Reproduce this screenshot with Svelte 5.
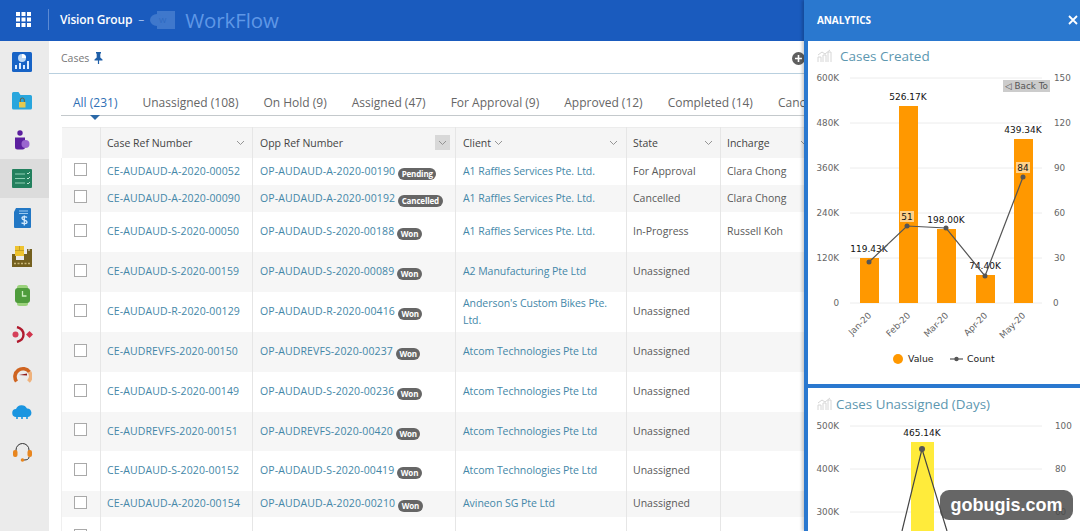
<script>
  const tabs = ['All (231)','Unassigned (108)','On Hold (9)','Assigned (47)','For Approval (9)','Approved (12)','Completed (14)','Cancelled (5)'];
  const rows = [
    {h:'s27',c:'CE-AUDAUD-A-2020-00052',o:'OP-AUDAUD-A-2020-00190',b:'Pending',cl:'A1 Raffles Services Pte. Ltd.',st:'For Approval',i:'Clara Chong'},
    {h:'s27',c:'CE-AUDAUD-A-2020-00090',o:'OP-AUDAUD-A-2020-00192',b:'Cancelled',cl:'A1 Raffles Services Pte. Ltd.',st:'Cancelled',i:'Clara Chong'},
    {h:'s40',c:'CE-AUDAUD-S-2020-00050',o:'OP-AUDAUD-S-2020-00188',b:'Won',cl:'A1 Raffles Services Pte. Ltd.',st:'In-Progress',i:'Russell Koh'},
    {h:'s40',c:'CE-AUDAUD-S-2020-00159',o:'OP-AUDAUD-S-2020-00089',b:'Won',cl:'A2 Manufacturing Pte Ltd',st:'Unassigned',i:''},
    {h:'s40',c:'CE-AUDAUD-R-2020-00129',o:'OP-AUDAUD-R-2020-00416',b:'Won',cl:"Anderson's Custom Bikes Pte. Ltd.",st:'Unassigned',i:''},
    {h:'s40',c:'CE-AUDREVFS-2020-00150',o:'OP-AUDREVFS-2020-00237',b:'Won',cl:'Atcom Technologies Pte Ltd',st:'Unassigned',i:''},
    {h:'s40',c:'CE-AUDAUD-S-2020-00149',o:'OP-AUDAUD-S-2020-00236',b:'Won',cl:'Atcom Technologies Pte Ltd',st:'Unassigned',i:''},
    {h:'s39',c:'CE-AUDREVFS-2020-00151',o:'OP-AUDREVFS-2020-00420',b:'Won',cl:'Atcom Technologies Pte Ltd',st:'Unassigned',i:''},
    {h:'s40',c:'CE-AUDAUD-S-2020-00152',o:'OP-AUDAUD-S-2020-00419',b:'Won',cl:'Atcom Technologies Pte Ltd',st:'Unassigned',i:''},
    {h:'s26',c:'CE-AUDAUD-A-2020-00154',o:'OP-AUDAUD-A-2020-00210',b:'Won',cl:'Avineon SG Pte Ltd',st:'Unassigned',i:''},
    {h:'s40',c:'',o:'',b:'',cl:'',st:'',i:''}
  ];
  const leftA = [['600K',78],['480K',123],['360K',168],['240K',213],['120K',258],['0',303]];
  const rightA = ['150','120','90','60','30','0'];
  const bars = [
    {x:860,top:258,m:'Jan-20',l:'119.43K',lx:869,ly:252},
    {x:899,top:106,m:'Feb-20',l:'526.17K',lx:908,ly:100},
    {x:937,top:229,m:'Mar-20',l:'198.00K',lx:946,ly:223},
    {x:976,top:275,m:'Apr-20',l:'74.40K',lx:985,ly:269},
    {x:1014,top:139,m:'May-20',l:'439.34K',lx:1023,ly:133}
  ];
  const pts = [[869,262],[907,226],[946,228],[985,276],[1023,177]];
  const poly = pts.map(p => p.join(',')).join(' ');
</script>

{#snippet chev()}
  <svg class="chev" width="9" height="6" viewBox="0 0 9 6"><path d="M1 1l3.500 3.500L8 1" fill="none" stroke="#8a8a8a" stroke-width="0.900"/></svg>
{/snippet}

{#snippet minichart()}
  <svg class="minichart" width="15" height="14" viewBox="0 0 15 14"><path d="M1 13V8h3v5M6 13V6h3v7M11 13V3h3v10M1 6l4-3 3 2 5-4" fill="none" stroke="#d6d6d6" stroke-width="1"/></svg>
{/snippet}

<div class="app">
  <header class="top">
    <svg class="waffle" width="15" height="15" viewBox="0 0 15 15" fill="#fff">
      {#each [0,5.5,11] as y}{#each [0,5.5,11] as x}<rect x={x} y={y} width="4" height="4"/>{/each}{/each}
    </svg>
    <span class="divider"></span>
    <span class="org">Vision Group</span>
    <span class="dash">–</span>
    <svg class="logo" width="25" height="20" viewBox="0 0 25 20"><rect x="7" y="1" width="18" height="18" fill="#3f78cc"/><ellipse cx="7" cy="10" rx="7" ry="6" fill="#3f78cc"/><text x="9" y="13" font-size="8" fill="#2d68c0" font-family="Open Sans">W</text></svg>
    <span class="product">WorkFlow</span>
  </header>

  <div class="body">
    <nav class="side">
      <div class="ni"><svg width="20" height="20" viewBox="0 0 20 20"><rect width="20" height="20" rx="1.500" fill="#1763c6"/><circle cx="10" cy="6" r="4" fill="#bcd8f5"/><path d="M10 6V2a4 4 0 0 1 4 4z" fill="#fff"/><path d="M3 17v-4h2v4zM7 17v-6h2v6zM11 17v-4h2v4zM15 17V9h2v8z" fill="#dcecff"/></svg></div>
      <div class="ni"><svg width="20" height="18" viewBox="0 0 20 18"><path d="M0 1.500A1.500 1.500 0 0 1 1.500 0h5l2 3h10A1.500 1.500 0 0 1 20 4.500V16a1.500 1.500 0 0 1-1.500 1.500h-17A1.500 1.500 0 0 1 0 16z" fill="#29a6dd"/><rect x="7" y="10" width="6.500" height="5.500" fill="#e6c94f"/><path d="M8.300 10V8a2 2 0 0 1 4 0v2" fill="none" stroke="#6b5f3a" stroke-width="1"/></svg></div>
      <div class="ni"><svg width="16" height="20" viewBox="0 0 16 20"><circle cx="6" cy="3" r="2.700" fill="#5b1f9e"/><path d="M1 7.500h10V17a2.500 2.500 0 0 1-2.500 2.500h-5A2.500 2.500 0 0 1 1 17z" fill="#5b1f9e"/><circle cx="11.500" cy="14" r="4" fill="#9a66cf"/></svg></div>
      <div class="ni active"><svg width="20" height="19" viewBox="0 0 20 19"><rect width="20" height="19" rx="1" fill="#23805e"/><path d="M3 5h10M3 9.500h10M3 14h10" stroke="#8fd0b4" stroke-width="1.200"/><path d="M15 4l1 1 2-2M15 9l1 1 2-2M15 14l1 1 2-2" fill="none" stroke="#cfeee0" stroke-width="0.900"/></svg></div>
      <div class="ni"><svg width="17" height="20" viewBox="0 0 17 20"><path d="M2 0h14a1 1 0 0 1 1 1v18a1 1 0 0 1-1 1H1a1 1 0 0 1-1-1V4z" fill="#2277c4"/><path d="M5 3h9M5 5.500h9" stroke="#9ccaf0" stroke-width="1"/><path d="M13 9.500c-1-1-5-1.500-5 .7 0 2.300 5 1.300 5 3.800 0 2.200-4 2-5.500.7M10.300 7.500v10" fill="none" stroke="#d3e9fb" stroke-width="1.300"/></svg></div>
      <div class="ni"><svg width="20" height="21" viewBox="0 0 20 21"><path d="M0 8h4v6h8V8h3V3h1.500v2h1V3H20v18H0z" fill="#74601f"/><rect x="3" y="0" width="9" height="10" fill="#eec32f"/><path d="M3 4.500h9M7.500 0v4.500" stroke="#b8951f" stroke-width="0.800"/><path d="M2 17.500h16" stroke="#c9b878" stroke-width="1.300" stroke-dasharray="2 1.500"/></svg></div>
      <div class="ni"><svg width="15" height="21" viewBox="0 0 15 21"><rect x="2" y="0" width="11" height="21" rx="2.500" fill="#9bd27c"/><rect y="3" width="15" height="15" rx="3" fill="#4f9c3c"/><path d="M7.500 6v5h4" fill="none" stroke="#cdeec0" stroke-width="1.300"/></svg></div>
      <div class="ni"><svg width="21" height="17" viewBox="0 0 21 17"><circle cx="3.500" cy="8.500" r="3" fill="#d5405a"/><path d="M5 1c5 1.500 6.500 4.500 6.500 7.500S10 14.500 5 16" fill="none" stroke="#b01a2e" stroke-width="2.400"/><path d="M14 8.500l3.500-3.500 3.500 3.500-3.500 3.500z" fill="#d0344c"/></svg></div>
      <div class="ni"><svg width="19" height="19" viewBox="0 0 19 19"><path d="M3.500 17.500A8 8 0 1 1 16.500 8" fill="none" stroke="#cf6420" stroke-width="3.600"/><path d="M16.500 8A8 8 0 0 1 15.500 17.500" fill="none" stroke="#efb27c" stroke-width="3.600"/><path d="M6 11l8-1.500v2z" fill="#8e1b1b"/></svg></div>
      <div class="ni"><svg width="20" height="16" viewBox="0 0 20 16"><path d="M4.500 12a4 4 0 0 1-.5-8 6 6 0 0 1 11-.5A4.300 4.300 0 0 1 16 12z" fill="#1a95e0"/><path d="M5 11v3M10 11v3M15 11v3" stroke="#1a95e0" stroke-width="1.600"/></svg></div>
      <div class="ni"><svg width="19" height="20" viewBox="0 0 19 20"><path d="M3 10V8a6.500 6.500 0 0 1 13 0v2" fill="none" stroke="#333" stroke-width="1"/><rect x="0" y="8" width="4.500" height="7" rx="2" fill="#e8861f"/><rect x="14.500" y="8" width="4.500" height="7" rx="2" fill="#e8861f"/><path d="M16 15q0 3-5 3" fill="none" stroke="#333" stroke-width="1"/><circle cx="9.500" cy="18" r="1.800" fill="#e8861f"/></svg></div>
    </nav>

    <main class="main">
      <div class="crumb">
        <span>Cases</span>
        <svg class="pin" width="9" height="12" viewBox="0 0 9 12"><path d="M2 0h5v1L6.300 2v3.500L8.500 7.500V8.500H5.100V12H3.900V8.500H.5V7.500L2.700 5.500V2L2 1z" fill="#1f5fa8"/></svg>
        <svg class="plus" width="13" height="13" viewBox="0 0 13 13"><circle cx="6.500" cy="6.500" r="6.500" fill="#5f5f5f"/><path d="M6.500 3v7M3 6.500h7" stroke="#fff" stroke-width="1.600"/></svg>
      </div>

      <div class="tabs">
        {#each tabs as t, i}
          <span class="tab" class:on={i === 0}>{t}</span>
        {/each}
      </div>

      <table>
        <colgroup><col class="c0"/><col class="c1"/><col class="c2"/><col class="c3"/><col class="c4"/><col class="c5"/></colgroup>
        <thead>
          <tr>
            <th></th>
            <th><div class="hc"><span>Case Ref Number</span>{@render chev()}</div></th>
            <th><div class="hc"><span>Opp Ref Number</span><span class="boxed">{@render chev()}</span></div></th>
            <th><div class="hc"><span class="lbl">Client {@render chev()}</span>{@render chev()}</div></th>
            <th><div class="hc"><span>State</span>{@render chev()}</div></th>
            <th><div class="hc"><span>Incharge</span>{@render chev()}</div></th>
          </tr>
        </thead>
        <tbody>
          {#each rows as r}
            <tr class={r.h}>
              <td class="ck"><span class="box"></span></td>
              <td><span class="link ref">{r.c}</span></td>
              <td><span class="link ref">{r.o}</span>{#if r.b}<span class="badge">{r.b}</span>{/if}</td>
              <td><span class="link client">{r.cl}</span></td>
              <td>{r.st}</td>
              <td>{r.i}</td>
            </tr>
          {/each}
        </tbody>
      </table>
    </main>
  </div>

  <aside class="panel">
    <div class="ph"><span>ANALYTICS</span><svg width="10" height="10" viewBox="0 0 10 10"><path d="M1 1l8 8M9 1l-8 8" stroke="#fff" stroke-width="1.800"/></svg></div>
    <section class="card first">
      <h3 class="t1">{@render minichart()}<span>Cases Created</span></h3>
      <svg class="chart" width="272" height="302" viewBox="808 70 272 302">
        {#each leftA as [l, y], i}
          <line x1="850" x2="1042" y1={y} y2={y} class="grid"/>
          <text x="839" y={y + 3} text-anchor="end" class="ax">{l}</text>
          <text x={i === 5 ? 1053 : 1054} y={y + 3} class="ax">{rightA[i]}</text>
        {/each}
        {#each bars as b}
          <rect x={b.x} y={b.top} width="19" height={303 - b.top} fill="#ff9800"/>
          <text x={b.lx} y={b.ly} text-anchor="middle" class="dl">{b.l}</text>
          <text x={b.x + 12} y="316" text-anchor="end" class="ax" transform={`rotate(-45 ${b.x + 12} 316)`}>{b.m}</text>
        {/each}
        <polyline points={poly} fill="none" stroke="#555" stroke-width="1.200"/>
        {#each pts as [x, y]}<circle cx={x} cy={y} r="2.500" fill="#555"/>{/each}
        <rect x="900" y="211" width="14" height="11" fill="#ffe9c4" opacity=".7"/>
        <text x="907" y="220" text-anchor="middle" class="dl">51</text>
        <rect x="1016" y="162" width="14" height="11" fill="#ffe9c4" opacity=".7"/>
        <text x="1023" y="171" text-anchor="middle" class="dl">84</text>
        <rect x="1003" y="80" width="47" height="12" fill="#ccc"/>
        <text x="1005" y="89" class="back">◁ Back To</text>
        <circle cx="898" cy="359" r="5" fill="#ff9800"/>
        <text x="908" y="362" class="lg">Value</text>
        <line x1="950" x2="963" y1="359" y2="359" stroke="#555" stroke-width="1.200"/>
        <circle cx="956.500" cy="359" r="2.200" fill="#555"/>
        <text x="967" y="362" class="lg">Count</text>
      </svg>
    </section>
    <section class="card">
      <h3 class="t2">{@render minichart()}<span>Cases Unassigned (Days)</span></h3>
      <svg class="chart" width="272" height="115" viewBox="808 416 272 115">
        {#each [['500K',426,'100'],['400K',469,'80'],['300K',512,'60']] as [l, y, r]}
          <line x1="850" x2="1042" y1={y} y2={y} class="grid"/>
          <text x="839" y={y + 3} text-anchor="end" class="ax">{l}</text>
          <text x="1055" y={y + 3} class="ax">{r}</text>
        {/each}
        <rect x="911" y="442" width="23" height="89" fill="#ffeb3b"/>
        <polyline points="902,531 922,449 947,531" fill="none" stroke="#444" stroke-width="1.200"/>
        <circle cx="922" cy="449" r="3" fill="#555"/>
        <text x="922" y="436" text-anchor="middle" class="dl">465.14K</text>
      </svg>
    </section>
  </aside>

  <div class="mark">gobugis.com</div>
</div>

<style>
  :global(body) { margin: 0; background: #fff; }
  :global(html), :global(body) { overflow: hidden; }
  .app { position: relative; width: 1080px; height: 531px; overflow: hidden; display: flex; flex-direction: column; font-family: "Open Sans", "Noto Sans", sans-serif; color: #5a5a5a; }

  .top { flex: 0 0 41px; background: #1a5bbe; display: flex; align-items: center; padding: 0 0 2px 16px; box-sizing: border-box; }
  .waffle { flex: none; }
  .divider { width: 1px; height: 21px; background: #5b8ad4; margin: 0 11px 0 17px; }
  .org { color: #fff; font-size: 12px; font-weight: 600; letter-spacing: -0.18px; }
  .dash { color: #9dbcec; font-size: 12px; margin: 0 6px; }
  .logo { margin-right: 10px; }
  .product { color: #5f97e6; font-size: 20.500px; letter-spacing: -0.1px; }

  .body { flex: 1; display: flex; min-height: 0; }
  .side { flex: 0 0 49px; background: #ebebeb; display: flex; flex-direction: column; padding-top: 1px; box-sizing: border-box; }
  .ni { height: 39px; display: flex; align-items: center; justify-content: center; padding-right: 5px; flex: none; }
  .active { background: #dcdcdc; }

  .main { flex: 1; min-width: 0; overflow: hidden; position: relative; }
  .crumb { height: 30px; padding-top: 2px; border-bottom: 1px solid #b9d0df; display: flex; align-items: center; padding-left: 12px; padding-right: 275px; font-size: 10.500px; color: #777; }
  .pin { margin-left: 5px; }
  .plus { margin-left: auto; }
  .tabs { display: flex; gap: 25px; margin: 18px 0 0 12px; padding: 0 0 3px 12px; height: 20px; align-items: center; border-bottom: 1px solid #c4c9cc; white-space: nowrap; font-size: 12px; color: #666; overflow: hidden; }
  .tab { flex: none; }
  .on { color: #2f6fb5; }
  .main::after { content: ""; position: absolute; left: 41px; top: 74px; border: 5.500px solid transparent; border-top: 5.500px solid #2a69a8; }

  table { margin: 11px 0 0 12px; width: 744px; table-layout: fixed; border-collapse: collapse; font-size: 10.500px; }
  .c0 { width: 39px; } .c1 { width: 152px; } .c2 { width: 203px; } .c3 { width: 171px; } .c4 { width: 94px; } .c5 { width: 95px; }
  thead tr { height: 30px; background: #f5f5f5; }
  th { font-weight: 400; text-align: left; color: #444; padding: 0 6px; border-right: 1px solid #e6e6e6; border-top: 1px solid #ececec; }
  th:nth-child(3), th:nth-child(4) { padding: 0 7px; }
  th:last-child { border-right: 0; }
  .hc { display: flex; align-items: center; justify-content: space-between; padding-right: 1px; }
  .lbl { display: flex; align-items: center; gap: 3px; }
  .boxed { width: 15px; height: 15px; background: #d8d8d8; display: flex; align-items: center; justify-content: center; margin-right: -3px; }
  .chev { flex: none; display: block; }
  td { padding: 0 6px; border-right: 1px solid #e6e6e6; vertical-align: middle; line-height: 17px; white-space: normal; }
  td:nth-child(3), td:nth-child(4) { padding: 0 7px; }
  td:first-child { border-left: 1px solid #efefef; }
  td:last-child { border-right: 0; }
  tbody tr:nth-child(even) { background: #f6f6f6; }
  .s26 { height: 26px; }
  .s27 { height: 27px; }
  .s39 { height: 39px; }
  .s40 { height: 40px; }
  td.ck { padding: 0 0 3px 12px; }
  .box { display: block; box-sizing: border-box; width: 13px; height: 13px; border: 1px solid #a9a9a9; background: #fff; }
  .link { color: #4487a8; }
  .ref { letter-spacing: 0.12px; }
  .client { letter-spacing: -0.05px; }
  .badge { display: inline-block; margin-left: 3px; background: #666; color: #fff; font-size: 8px; font-weight: 700; line-height: 12px; padding: 0 3.500px; border-radius: 6px; vertical-align: -2px; letter-spacing: -0.15px; }

  .panel { position: absolute; top: 0; right: 0; bottom: 0; width: 276px; background: #2a78cf; padding-left: 4px; box-sizing: border-box; box-shadow: -2px 0 3px rgba(0,0,0,.2); display: flex; flex-direction: column; gap: 4px; }
  .ph { flex: 0 0 41px; box-sizing: border-box; margin-bottom: -4px; display: flex; align-items: center; justify-content: space-between; padding: 0 2px 2px 9px; color: #fff; font-size: 10px; font-weight: 700; letter-spacing: -0.1px; }
  .card { background: #fff; flex: none; }
  .first { height: 343px; }
  h3 { margin: 0; box-sizing: border-box; font-weight: 400; color: #5d97b0; display: flex; align-items: center; }
  .t1 { height: 29px; padding: 1px 0 0 9px; gap: 8px; font-size: 13.500px; }
  .t2 { height: 28px; padding: 4px 0 0 9px; gap: 4px; font-size: 13.400px; }
  .minichart { flex: none; }
  .chart { display: block; }
  .grid { stroke: #ececec; stroke-width: 1; }
  .ax { font-family: "DejaVu Sans", sans-serif; font-size: 8.800px; fill: #666; }
  .dl { font-family: "DejaVu Sans", sans-serif; font-size: 9px; fill: #111; }
  .lg { font-family: "DejaVu Sans", sans-serif; font-size: 9.300px; fill: #222; }
  .back { font-family: "DejaVu Sans", sans-serif; font-size: 8.800px; fill: #555; }
  .mark { position: absolute; left: 940px; top: 490px; width: 133px; height: 30px; border-radius: 9px; background: rgba(75,75,75,.85); color: #fff; font-family: "Liberation Sans", sans-serif; font-weight: 700; font-size: 18px; line-height: 30px; text-align: center; }
</style>
